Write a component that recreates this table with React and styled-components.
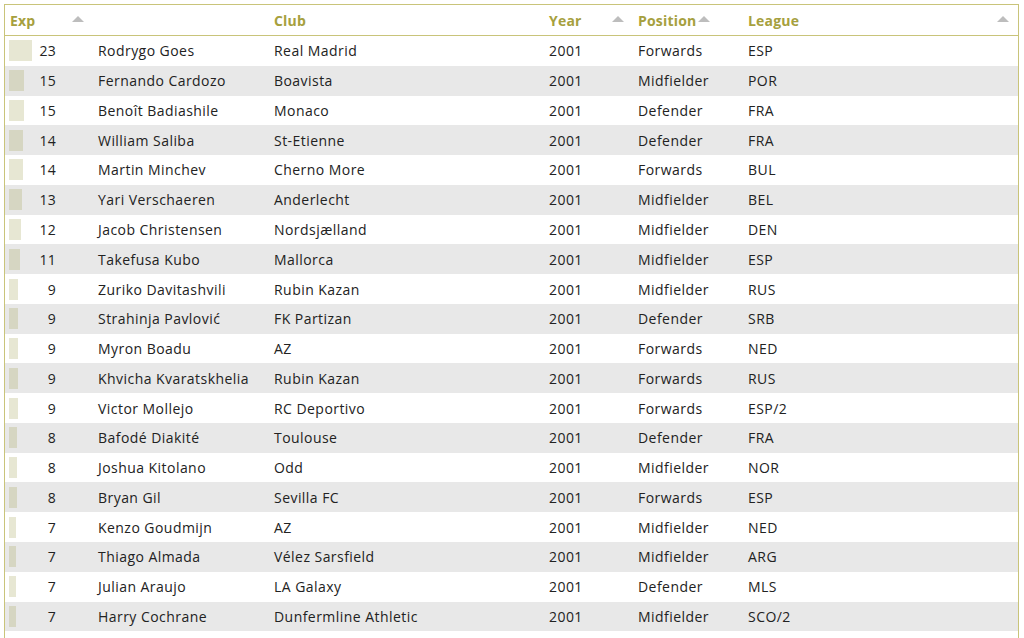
import React from 'react';
import styled, { createGlobalStyle } from 'styled-components';

const GlobalStyle = createGlobalStyle`
  html, body {
    margin: 0;
    height: 100%;
    background: #ffffff;
    font-family: "Open Sans", "Liberation Sans", sans-serif;
    overflow: hidden;
  }
`;

const Page = styled.div`
  height: 638px;
  overflow: hidden;
  padding: 4px 5px 0 4px;
  box-sizing: border-box;
`;

const Table = styled.div`
  border: 1px solid #c9c47a;
  border-bottom: none;
`;

const cols = '88px 176px 275px 89px 110px 1fr';

const HeadRow = styled.div`
  display: grid;
  grid-template-columns: ${cols};
  height: 30px;
  border-bottom: 1px solid #c9c47a;
`;

const HeadCell = styled.div`
  display: flex;
  align-items: center;
  padding: 0 ${p => p.$padRight || 9}px 0 5px;
  font-size: 14px;
  font-weight: 700;
  letter-spacing: 0.2px;
  color: #a6a03e;
`;

const Arrow = styled.span`
  margin-left: auto;
  width: 0;
  height: 0;
  border-left: 6px solid transparent;
  border-right: 6px solid transparent;
  border-bottom: 6px solid #bdbdbd;
  margin-bottom: 3px;
`;

const Row = styled.div`
  display: grid;
  grid-template-columns: ${cols};
  height: 29.78px;
  align-items: center;
  background: ${p => (p.$shade ? '#e8e8e8' : '#ffffff')};
  font-size: 14px;
  letter-spacing: 0.45px;
  color: #222222;
`;

const Cell = styled.div`
  padding-left: 5px;
  white-space: nowrap;
`;

const ExpCell = styled.div`
  display: flex;
  align-items: center;
  padding-left: 4px;
`;

const BarSlot = styled.div`
  width: 30px;
  height: 21px;
`;

const Bar = styled.div`
  height: 100%;
  background: rgba(160, 160, 80, 0.25);
`;

const Num = styled.div`
  width: 17px;
  text-align: right;
  letter-spacing: 0.2px;
`;

const players = [
  [23, 'Rodrygo Goes', 'Real Madrid', 'Forwards', 'ESP'],
  [15, 'Fernando Cardozo', 'Boavista', 'Midfielder', 'POR'],
  [15, 'Benoît Badiashile', 'Monaco', 'Defender', 'FRA'],
  [14, 'William Saliba', 'St-Etienne', 'Defender', 'FRA'],
  [14, 'Martin Minchev', 'Cherno More', 'Forwards', 'BUL'],
  [13, 'Yari Verschaeren', 'Anderlecht', 'Midfielder', 'BEL'],
  [12, 'Jacob Christensen', 'Nordsjælland', 'Midfielder', 'DEN'],
  [11, 'Takefusa Kubo', 'Mallorca', 'Midfielder', 'ESP'],
  [9, 'Zuriko Davitashvili', 'Rubin Kazan', 'Midfielder', 'RUS'],
  [9, 'Strahinja Pavlović', 'FK Partizan', 'Defender', 'SRB'],
  [9, 'Myron Boadu', 'AZ', 'Forwards', 'NED'],
  [9, 'Khvicha Kvaratskhelia', 'Rubin Kazan', 'Forwards', 'RUS'],
  [9, 'Victor Mollejo', 'RC Deportivo', 'Forwards', 'ESP/2'],
  [8, 'Bafodé Diakité', 'Toulouse', 'Defender', 'FRA'],
  [8, 'Joshua Kitolano', 'Odd', 'Midfielder', 'NOR'],
  [8, 'Bryan Gil', 'Sevilla FC', 'Forwards', 'ESP'],
  [7, 'Kenzo Goudmijn', 'AZ', 'Midfielder', 'NED'],
  [7, 'Thiago Almada', 'Vélez Sarsfield', 'Midfielder', 'ARG'],
  [7, 'Julian Araujo', 'LA Galaxy', 'Defender', 'MLS'],
  [7, 'Harry Cochrane', 'Dunfermline Athletic', 'Midfielder', 'SCO/2'],
];

export default function App() {
  return (
    <Page>
      <GlobalStyle />
      <Table>
        <HeadRow>
          <HeadCell>Exp<Arrow /></HeadCell>
          <HeadCell />
          <HeadCell>Club</HeadCell>
          <HeadCell>Year<Arrow /></HeadCell>
          <HeadCell $padRight={33}>Position<Arrow /></HeadCell>
          <HeadCell>League<Arrow /></HeadCell>
        </HeadRow>
        {players.map(([exp, name, club, pos, league], i) => (
          <Row key={name} $shade={i % 2 === 1}>
            <ExpCell>
              <BarSlot>
                <Bar style={{ width: exp }} />
              </BarSlot>
              <Num>{exp}</Num>
            </ExpCell>
            <Cell>{name}</Cell>
            <Cell>{club}</Cell>
            <Cell>2001</Cell>
            <Cell>{pos}</Cell>
            <Cell>{league}</Cell>
          </Row>
        ))}
        <Row />
      </Table>
    </Page>
  );
}
